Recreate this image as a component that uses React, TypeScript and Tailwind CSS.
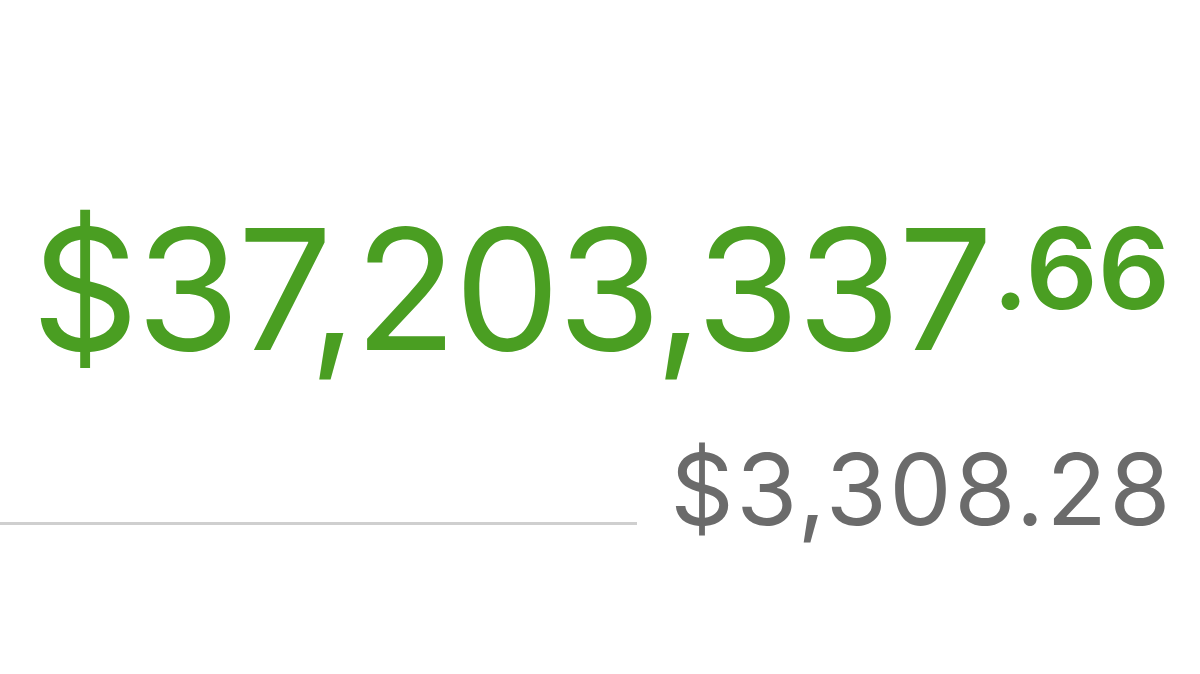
export default function App() {
  return (
    <div className="w-[1200px] h-[674px] bg-white overflow-hidden" style={{ fontFamily: "Inter, 'Liberation Sans', sans-serif" }}>
      <div className="flex flex-col items-end pr-[30px] pt-[205px]">
        <div className="flex items-start text-[#4a9e22]">
          <span className="text-[168px] leading-none font-normal tracking-[-2.7px]">$37,203,337</span>
          <span className="text-[113px] leading-none font-semibold mt-[7px] ml-[2px]">.66</span>
        </div>
        <div className="flex items-end w-full mt-[67px]">
          <div className="flex-1 h-[3px] bg-[#cfcfcf] mb-[14px]" />
          <span className="ml-[33px] mr-[-3px] text-[99px] leading-none tracking-[2.4px] text-[#6b6b6b]">$3,308.28</span>
        </div>
      </div>
    </div>
  );
}
